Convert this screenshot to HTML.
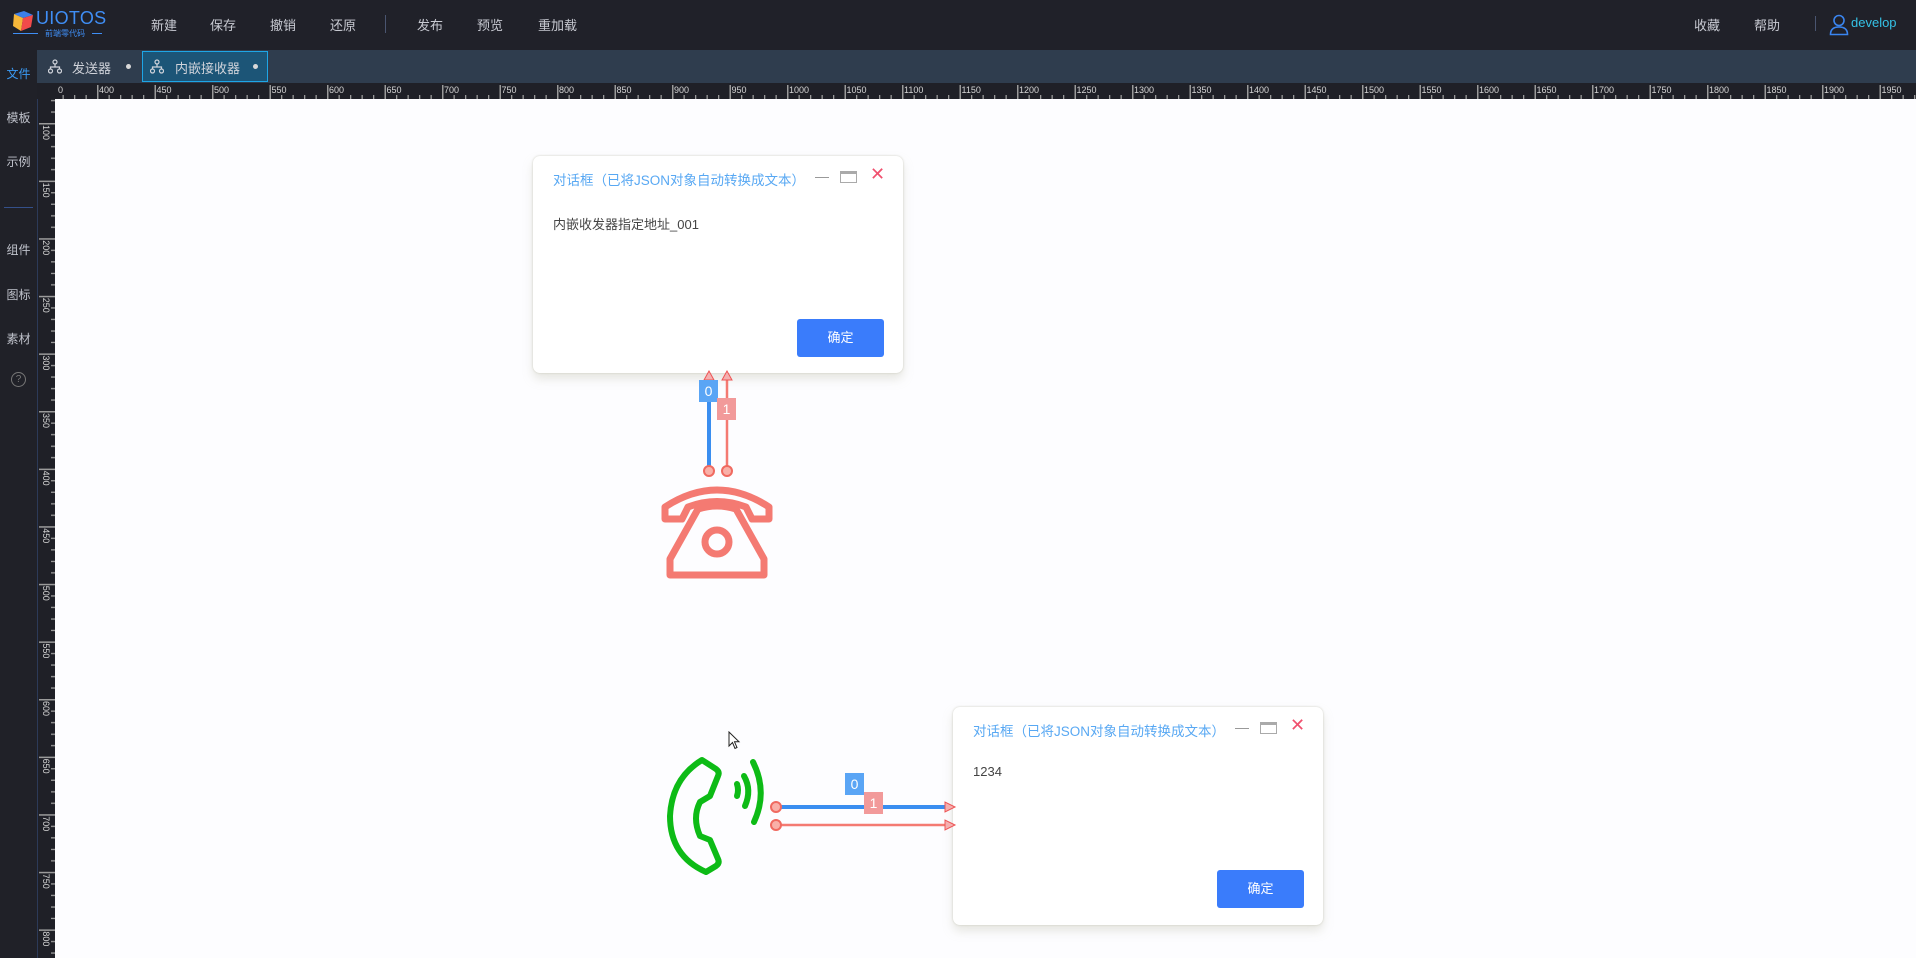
<!DOCTYPE html>
<html><head><meta charset="utf-8">
<style>
*{margin:0;padding:0;box-sizing:border-box}
body{width:1916px;height:958px;overflow:hidden;background:#fdfdff;font-family:"Liberation Sans","Noto Sans CJK SC",sans-serif;position:relative}
.abs{position:absolute}
#top{left:0;top:0;width:1916px;height:50px;background:#202129}
.mi{position:absolute;top:15px;color:#c8cad2;font-size:13px}
#tabs{left:37px;top:50px;width:1879px;height:33px;background:#2f3d4e}
#side{left:0;top:50px;width:37px;height:908px;background:#202128}
.si{position:absolute;left:0;width:37px;text-align:center;color:#c0c3cc;font-size:12px}
.dlg{position:absolute;background:#fff;border-radius:7px;box-shadow:0 6px 10px rgba(190,190,170,.35),0 0 2px rgba(180,180,160,.6)}
.dt{position:absolute;left:20px;top:13px;color:#58a8f3;font-size:13.5px}
.dc{position:absolute;left:20px;color:#444;font-size:13px}
.btn{position:absolute;width:87px;height:38px;background:#3a7cfb;border-radius:3px;color:#fff;font-size:13px;text-align:center;line-height:38px}
.lb{position:absolute;width:19px;height:22px;color:#fff;font-size:14px;text-align:center;line-height:22px}
</style></head><body>
<div id="top" class="abs">
  <svg class="abs" style="left:12px;top:10px" width="22" height="22" viewBox="0 0 22 22">
    <polygon points="2,4 12,1 21,5 11,8" fill="#3d7fe8"/>
    <polygon points="2,4 11,8 9,21 1,16" fill="#f5b73a"/>
    <polygon points="11,8 21,5 19,17 9,21" fill="#f24a4a"/>
  </svg>
  <div class="abs" style="left:36px;top:8px;color:#3f8ef5;font-size:18px;letter-spacing:0.3px">UIOTOS</div>
  <div class="abs" style="left:13px;top:33px;width:25px;height:1px;background:#3f8ef5"></div>
  <div class="abs" style="left:45px;top:28px;color:#3f8ef5;font-size:8px">前端零代码</div>
  <div class="abs" style="left:92px;top:33px;width:10px;height:1px;background:#3f8ef5"></div>
  <div class="mi" style="left:151px">新建</div>
  <div class="mi" style="left:210px">保存</div>
  <div class="mi" style="left:270px">撤销</div>
  <div class="mi" style="left:330px">还原</div>
  <div class="abs" style="left:385px;top:15px;width:1px;height:18px;background:#4a5570"></div>
  <div class="mi" style="left:417px">发布</div>
  <div class="mi" style="left:477px">预览</div>
  <div class="mi" style="left:538px">重加载</div>
  <div class="mi" style="left:1694px">收藏</div>
  <div class="mi" style="left:1754px">帮助</div>
  <div class="abs" style="left:1815px;top:16px;width:1px;height:15px;background:#4a5570"></div>
  <svg class="abs" style="left:1829px;top:14px" width="20" height="22" viewBox="0 0 20 22">
    <circle cx="10" cy="6.5" r="5" fill="none" stroke="#3a85f0" stroke-width="1.6"/>
    <path d="M1.5 20.5 Q1.5 13 10 13 Q18.5 13 18.5 20.5 Z" fill="none" stroke="#3a85f0" stroke-width="1.6"/>
  </svg>
  <div class="abs" style="left:1851px;top:15px;color:#35c2e6;font-size:13px">develop</div>
</div>

<div id="tabs" class="abs">
  <svg class="abs" style="left:11px;top:9px" width="14" height="15" viewBox="0 0 14 15"><g fill="none" stroke="#d0d3da" stroke-width="1.2"><circle cx="7" cy="3" r="2"/><circle cx="2.5" cy="12" r="2"/><circle cx="11.5" cy="12" r="2"/><path d="M7 5V8M2.5 10V8H11.5V10"/></g></svg>
  <div class="abs" style="left:35px;top:8px;color:#d0d3da;font-size:13px">发送器</div>
  <div class="abs" style="left:89px;top:14px;width:5px;height:5px;border-radius:50%;background:#d8d8d8"></div>
  <div class="abs" style="left:105px;top:1px;width:126px;height:31px;border:1px solid #1ea6e6;background:#1c5577"></div>
  <svg class="abs" style="left:113px;top:9px" width="14" height="15" viewBox="0 0 14 15"><g fill="none" stroke="#d0d3da" stroke-width="1.2"><circle cx="7" cy="3" r="2"/><circle cx="2.5" cy="12" r="2"/><circle cx="11.5" cy="12" r="2"/><path d="M7 5V8M2.5 10V8H11.5V10"/></g></svg>
  <div class="abs" style="left:138px;top:8px;color:#d0d3da;font-size:13px">内嵌接收器</div>
  <div class="abs" style="left:216px;top:14px;width:5px;height:5px;border-radius:50%;background:#d8d8d8"></div>
</div>

<div id="side" class="abs">
  <div class="si" style="top:15px;color:#3a9af5">文件</div>
  <div class="si" style="top:59px">模板</div>
  <div class="si" style="top:103px">示例</div>
  <div class="abs" style="left:4px;top:157px;width:29px;height:1px;background:#34508a"></div>
  <div class="si" style="top:191px">组件</div>
  <div class="si" style="top:236px">图标</div>
  <div class="si" style="top:280px">素材</div>
  <div class="abs" style="left:11px;top:322px;width:15px;height:15px;border-radius:50%;border:1px solid #777;color:#777;font-size:10px;text-align:center;line-height:13px">?</div>
</div>

<svg class="abs" style="left:37px;top:83px" width="1879" height="16">
  <rect width="1879" height="16" fill="#1f2027"/>
  <defs>
    <pattern id="hp" x="60" y="0" width="57.5" height="16" patternUnits="userSpaceOnUse">
      <rect x="0" y="2" width="1.5" height="14" fill="#9a9a9a"/>
      <rect x="11.5" y="12" width="1.3" height="4" fill="#9a9a9a"/>
      <rect x="23" y="12" width="1.3" height="4" fill="#9a9a9a"/>
      <rect x="34.5" y="12" width="1.3" height="4" fill="#9a9a9a"/>
      <rect x="46" y="12" width="1.3" height="4" fill="#9a9a9a"/>
    </pattern>
  </defs>
  <rect x="18" width="1861" height="16" fill="url(#hp)"/>
  <g fill="#d6d6d6" font-size="9" font-family="Liberation Sans,sans-serif">
    <text x="21" y="10">0</text>
    <text x="62" y="10">400</text><text x="119.5" y="10">450</text><text x="177" y="10">500</text><text x="234.5" y="10">550</text><text x="292" y="10">600</text><text x="349.5" y="10">650</text><text x="407" y="10">700</text><text x="464.5" y="10">750</text><text x="522" y="10">800</text><text x="579.5" y="10">850</text><text x="637" y="10">900</text><text x="694.5" y="10">950</text><text x="752" y="10">1000</text><text x="809.5" y="10">1050</text><text x="867" y="10">1100</text><text x="924.5" y="10">1150</text><text x="982" y="10">1200</text><text x="1039.5" y="10">1250</text><text x="1097" y="10">1300</text><text x="1154.5" y="10">1350</text><text x="1212" y="10">1400</text><text x="1269.5" y="10">1450</text><text x="1327" y="10">1500</text><text x="1384.5" y="10">1550</text><text x="1442" y="10">1600</text><text x="1499.5" y="10">1650</text><text x="1557" y="10">1700</text><text x="1614.5" y="10">1750</text><text x="1672" y="10">1800</text><text x="1729.5" y="10">1850</text><text x="1787" y="10">1900</text><text x="1844.5" y="10">1950</text>
  </g>
</svg>

<svg class="abs" style="left:37px;top:99px" width="18" height="859">
  <rect width="18" height="859" fill="#1f2027"/>
  <rect x="0" y="0" width="1" height="859" fill="#2c3a58"/>
  <defs>
    <pattern id="vp" x="0" y="24" width="18" height="57.6" patternUnits="userSpaceOnUse">
      <rect x="2" y="0" width="16" height="1.5" fill="#9a9a9a"/>
      <rect x="14" y="11.5" width="4" height="1.3" fill="#9a9a9a"/>
      <rect x="14" y="23" width="4" height="1.3" fill="#9a9a9a"/>
      <rect x="14" y="34.6" width="4" height="1.3" fill="#9a9a9a"/>
      <rect x="14" y="46" width="4" height="1.3" fill="#9a9a9a"/>
    </pattern>
  </defs>
  <rect width="18" height="859" fill="url(#vp)"/>
  <g fill="#d6d6d6" font-size="9" font-family="Liberation Sans,sans-serif">
    <text transform="translate(6,26) rotate(90)">100</text>
    <text transform="translate(6,83.6) rotate(90)">150</text>
    <text transform="translate(6,141.2) rotate(90)">200</text>
    <text transform="translate(6,198.8) rotate(90)">250</text>
    <text transform="translate(6,256.4) rotate(90)">300</text>
    <text transform="translate(6,314) rotate(90)">350</text>
    <text transform="translate(6,371.6) rotate(90)">400</text>
    <text transform="translate(6,429.2) rotate(90)">450</text>
    <text transform="translate(6,486.8) rotate(90)">500</text>
    <text transform="translate(6,544.4) rotate(90)">550</text>
    <text transform="translate(6,602) rotate(90)">600</text>
    <text transform="translate(6,659.6) rotate(90)">650</text>
    <text transform="translate(6,717.2) rotate(90)">700</text>
    <text transform="translate(6,774.8) rotate(90)">750</text>
    <text transform="translate(6,832.4) rotate(90)">800</text>
  </g>
</svg>

<!-- dialog 1 -->
<div class="dlg" style="left:533px;top:156px;width:370px;height:217px">
  <div class="dt">对话框（已将JSON对象自动转换成文本）</div>
  <div class="abs" style="left:282px;top:21px;width:14px;height:1px;background:#999"></div>
  <div class="abs" style="left:307px;top:15px;width:17px;height:12px;border:1.5px solid #aaa;border-top-width:3px"></div>
  <div class="abs" style="left:337px;top:8px;color:#f0506e;font-size:18px">✕</div>
  <div class="dc" style="top:58px">内嵌收发器指定地址_001</div>
  <div class="btn" style="left:264px;top:163px">确定</div>
</div>

<!-- dialog 2 -->
<div class="dlg" style="left:953px;top:707px;width:370px;height:218px">
  <div class="dt">对话框（已将JSON对象自动转换成文本）</div>
  <div class="abs" style="left:282px;top:21px;width:14px;height:1px;background:#999"></div>
  <div class="abs" style="left:307px;top:15px;width:17px;height:12px;border:1.5px solid #aaa;border-top-width:3px"></div>
  <div class="abs" style="left:337px;top:8px;color:#f0506e;font-size:18px">✕</div>
  <div class="dc" style="top:57px">1234</div>
  <div class="btn" style="left:264px;top:163px">确定</div>
</div>

<!-- vertical links -->
<svg class="abs" style="left:690px;top:368px" width="60" height="112">
  <line x1="19" y1="10" x2="19" y2="102" stroke="#3a8ef0" stroke-width="4"/>
  <line x1="37" y1="10" x2="37" y2="102" stroke="#f47a72" stroke-width="2.5"/>
  <polygon points="19,3 14,12 24,12" fill="#f4b0b0" stroke="#e55" stroke-width="1"/>
  <polygon points="37,3 32,12 42,12" fill="#f4b0b0" stroke="#e55" stroke-width="1"/>
  <circle cx="19" cy="103" r="5" fill="#f9b0a8" stroke="#f06a60" stroke-width="2"/>
  <circle cx="37" cy="103" r="5" fill="#f9b0a8" stroke="#f06a60" stroke-width="2"/>
</svg>
<div class="lb" style="left:699px;top:380px;background:#5aa5f5">0</div>
<div class="lb" style="left:717px;top:398px;background:#f29a9a">1</div>

<!-- red phone -->
<svg class="abs" style="left:660px;top:479px" width="114" height="102" viewBox="0 0 114 102">
  <g fill="none" stroke="#f47a72" stroke-width="7" stroke-linejoin="round">
    <path d="M5 40 L5 28 Q57 -6 109 28 L109 40 L92 40 L86 28 Q57 17 28 28 L22 40 Z"/>
    <path d="M38 30 Q57 24 76 30 L104 80 L104 96 L10 96 L10 80 Z"/>
    <circle cx="57" cy="63" r="12"/>
  </g>
</svg>

<!-- green phone -->
<svg class="abs" style="left:666px;top:756px" width="104" height="120" viewBox="0 0 104 120">
  <g fill="none" stroke="#0dbb16" stroke-width="6" stroke-linejoin="round" stroke-linecap="round">
    <path d="M36 4 L50 13 Q54 16 52 20 L44 40 L34 46 Q26 62 34 80 L44 84 L52 103 Q54 107 50 110 L40 116 Q4 100 4 60 Q6 22 36 4 Z"/>
    <path d="M71 28 Q73 34 71 40"/>
    <path d="M78 20 Q86 34 79 50"/>
    <path d="M87 6 Q102 36 88 66"/>
  </g>
</svg>

<!-- horizontal links -->
<svg class="abs" style="left:768px;top:796px" width="190" height="40">
  <line x1="8" y1="11" x2="180" y2="11" stroke="#3a8ef0" stroke-width="4"/>
  <line x1="8" y1="29" x2="180" y2="29" stroke="#f47a72" stroke-width="2.5"/>
  <polygon points="187,11 177,6 177,16" fill="#f4b0b0" stroke="#e55" stroke-width="1"/>
  <polygon points="187,29 177,24 177,34" fill="#f4b0b0" stroke="#e55" stroke-width="1"/>
  <circle cx="8" cy="11" r="5" fill="#f9b0a8" stroke="#f06a60" stroke-width="2"/>
  <circle cx="8" cy="29" r="5" fill="#f9b0a8" stroke="#f06a60" stroke-width="2"/>
</svg>
<div class="lb" style="left:845px;top:773px;background:#5aa5f5">0</div>
<div class="lb" style="left:864px;top:792px;background:#f29a9a">1</div>

<!-- cursor -->
<svg class="abs" style="left:728px;top:731px" width="14" height="20" viewBox="0 0 14 20">
  <path d="M1 1 L1 15 L4.5 11.5 L7 17.5 L9 16.5 L6.5 10.8 L11 10.8 Z" fill="#fff" stroke="#222" stroke-width="1"/>
</svg>
</body></html>
